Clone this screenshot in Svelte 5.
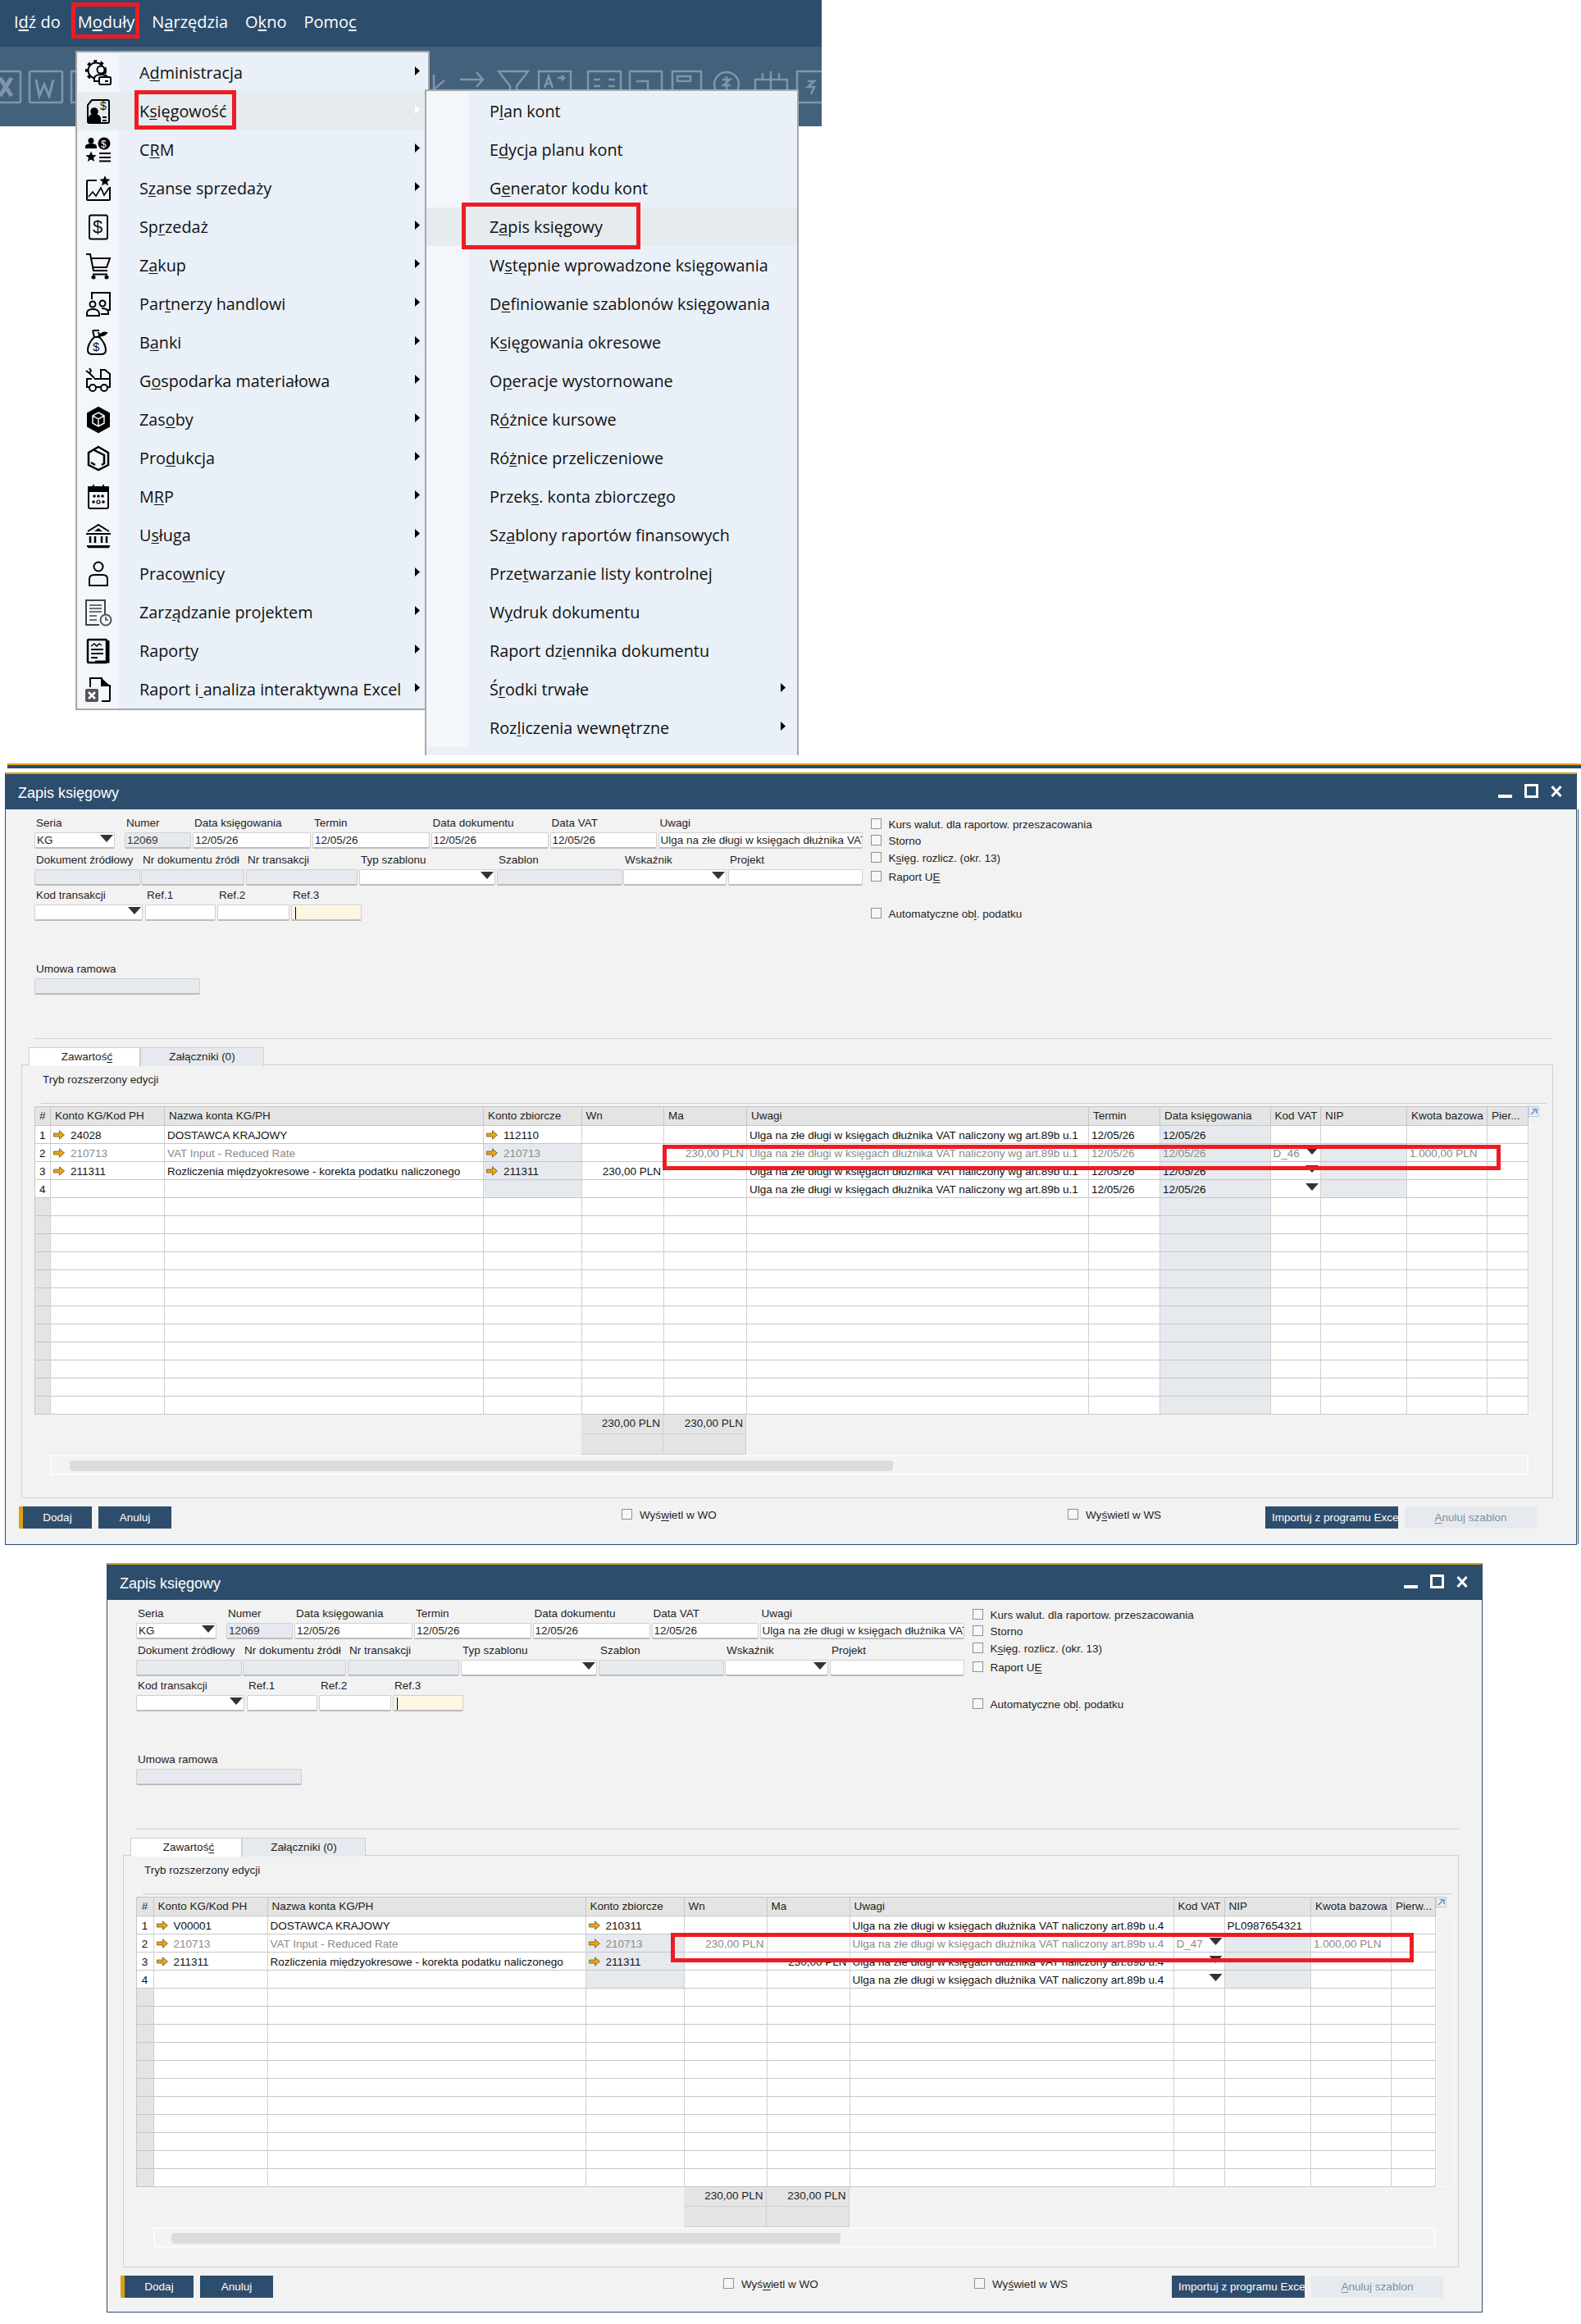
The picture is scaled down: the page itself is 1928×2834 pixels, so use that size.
<script>
	const topMenu = ['I_dź do', 'M_oduły', 'N_arzędzia', 'O_kno', 'Pomo_c'];

	const toolIcons = `
		<rect x="-6" y="30" width="31" height="38" rx="2"/><path d="M0 38l14 22M14 38L0 60" stroke-width="5"/>
		<rect x="36" y="30" width="40" height="38" rx="2"/><path d="M44 40l4 20 6-14 6 14 5-20" stroke-width="3"/>
		<rect x="87" y="30" width="30" height="38"/>
		<path d="M529 34v18l13-11M561 40h28m-8-9l8 9-8 9M561 52v5"/>
		<path d="M608 30h36l-14 18v10h-8V48z"/>
		<rect x="657" y="30" width="39" height="26"/><path d="M664 50l5-14 5 14m-8-5h6M680 38h8m-3-3l3 3-3 3"/>
		<path d="M717 56V30h40v26M724 40h8m10 0h8M724 48h8m10 0h8"/>
		<path d="M768 56V30h39v26M776 42h14v10"/>
		<rect x="820" y="30" width="35" height="26"/><rect x="826" y="36" width="16" height="6"/>
		<circle cx="886" cy="46" r="15"/><path d="M897 56l8 4M886 36v20M881 40h9l-8 7h9"/>
		<path d="M921 56V40h39v16M940 30v26M930 40v-8m20 8v-8"/>
		<rect x="972" y="30" width="40" height="38"/><path d="M985 42h8l-8 7h8l-4 9"/>`;

	const icons = [
		`<circle cx="13" cy="13" r="9.5"/><circle cx="13" cy="13" r="11.5" stroke-width="3" stroke-dasharray="4 4.5"/><g fill="#f3f7fb"><circle cx="19" cy="12" r="4.5"/><path d="M11 26v-3q0-5 8-5t8 4v4z"/><rect x="17" y="21" width="14" height="9" rx="1.5"/></g><path d="M24 26h4"/>`,
		`<path d="M8 2h19a2 2 0 0 1 2 2v24a2 2 0 0 1-2 2H5a2 2 0 0 1-2-2V8z"/><circle cx="11" cy="16" r="3.8" fill="#000"/><path d="M5 28v-4q0-4 6-4t7 4v4z" fill="#000"/><text x="18" y="14" class="glyph" font-size="14">$</text><path d="M21 23h5M21 27h5"/>`,
		`<circle cx="7" cy="4.5" r="3.5" fill="#000" stroke="none"/><path d="M0 14v-2q0-4 7-4t7 4v2z" fill="#000" stroke="none"/><circle cx="23" cy="8" r="7.5" fill="#000" stroke="none"/><text x="19" y="12.500" class="glyph" font-size="12" fill="#fff">$</text><polygon points="7,17.500 8.900,21.900 13.500,22.300 10,25.400 11.200,30 7,27.500 2.800,30 4,25.400 0.500,22.300 5.100,21.900" fill="#000" stroke="none"/><path d="M17 20h14M17 25h14M17 29.500h14"/>`,
		`<path d="M14 6H3a1 1 0 0 0-1 1v22a1 1 0 0 0 1 1h26a1 1 0 0 0 1-1V14"/><path d="M4 26l5-6 4 5 6-10 4 9 6-9" stroke-width="1.600"/><polygon points="24,0 25.800,4.300 30.500,4.700 27,7.800 28,12.500 24,10 20,12.500 21,7.800 17.500,4.700 22.200,4.300" fill="#000" stroke="none"/>`,
		`<rect x="5" y="1.500" width="22" height="29" rx="2"/><text x="9" y="23" class="glyph" font-size="22">$</text>`,
		`<path d="M1 2h5l4 20h17M7 7h23l-4 11H9M9 26.500h18" fill="none"/><circle cx="10" cy="30" r="1.500" fill="#000"/><circle cx="26" cy="30" r="1.500" fill="#000"/>`,
		`<path d="M8 10V2h22v21h-3"/><circle cx="9" cy="16" r="3.500"/><path d="M2 30v-3q0-5 7-5t8 5v3z"/><circle cx="21" cy="15" r="3.500"/><path d="M20 21q8 0 8 5v2h-9"/>`,
		`<path d="M11 9C5 15 3 21 3 25q0 5 6 5h10q6 0 6-5c0-4-2-10-8-16zM11 9h6M9 1l2 8M17 1l-8 0M18 9L16 3"/><path d="M17 7q5-5 9-3-3 4-9 3z" fill="#000"/><text x="9" y="26" class="glyph" font-size="15">$</text>`,
		`<path d="M1 3l4 3 2-3-2-3M5 6l6 6M2 17V13h6M11 13h19v-6l-6-5h-5v11M2 17v6h3M13 23h6M27 23h3v-10"/><circle cx="9" cy="24" r="4"/><circle cx="23" cy="24" r="4"/>`,
		`<polygon points="16,1 29,8 29,24 16,31 3,24 3,8" fill="#000"/><path d="M16 7l7 4v9l-7 4-7-4v-9zM9 11l7 4 7-4M16 15v9" stroke="#f3f7fb" stroke-width="1.500"/>`,
		`<polygon points="16,2 28,9 28,24 16,30 4,24 4,9" stroke-width="2.500"/><path d="M11 6l12 6v10l-3 2M7 21l5 3" stroke-width="2.500"/>`,
		`<rect x="4" y="4" width="24" height="26" rx="2"/><rect x="4" y="4" width="24" height="5" fill="#000"/><path d="M10 1v5M22 1v5"/><g fill="#000" stroke="none"><circle cx="11" cy="15" r="1.800"/><circle cx="16" cy="15" r="1.800"/><circle cx="21" cy="15" r="1.800"/><circle cx="10" cy="22" r="1.800"/><circle cx="22" cy="22" r="1.800"/></g><circle cx="16" cy="22" r="2" stroke-width="1.200"/>`,
		`<path d="M3 11L16 3l13 8M1 14h30M2 29h28" stroke-width="2"/><polygon points="16,7 21,11 11,11" fill="#000" stroke="none"/><path d="M6 17v8M12 17v8M20 17v8M26 17v8" stroke-width="2.500"/><path d="M3 30.500h26" stroke-width="1.500"/>`,
		`<circle cx="16" cy="7" r="5.500"/><path d="M5 30v-8q0-5 6-5h10q6 0 6 5v8z"/>`,
		`<path d="M17 31H1V1h23v17" stroke="#444"/><path d="M5 7h15M5 11h15M5 15h15M5 20h9M5 25h9" stroke="#444" stroke-width="1.500"/><circle cx="25" cy="25" r="6.500" stroke="#555"/><path d="M25 21v4h3" stroke="#444" stroke-width="1.500"/>`,
		`<rect x="3" y="2" width="23" height="28" rx="1" stroke-width="2.500"/><path d="M28 3v26H12" stroke-width="3"/><path d="M7 10l4-3 3 3 3-3 3 2" stroke-width="1.500"/><path d="M7 14h15M7 19h15M7 24h8" stroke-width="2"/>`,
		`<path d="M6 13V2h14v9h10v18a1 1 0 0 1-1 1H20" fill="none"/><polygon points="20,2 30,11 20,11" fill="#000" stroke="none"/><rect x="0" y="15" width="16" height="16" rx="2" fill="#555" stroke="none"/><path d="M4 19l8 8M12 19l-8 8" stroke="#fff" stroke-width="2.500"/>`
	];

	const modules = [
		'A_dministracja', 'K_sięgowość', 'C_RM', 'S_zanse sprzedaży', 'Sp_rzedaż', 'Z_akup', 'Par_tnerzy handlowi',
		'B_anki', 'G_ospodarka materiałowa', 'Zas_oby', 'Pro_dukcja', 'M_RP', 'U_sługa', 'Praco_wnicy',
		'Zarz_ądzanie projektem', 'Rapor_ty', 'Raport i_ analiza interaktywna Excel'
	];

	const accounting = [
		'P_lan kont', 'E_dycja planu kont', 'G_enerator kodu kont', 'Z_apis księgowy', 'W_stępnie wprowadzone księgowania',
		'D_efiniowanie szablonów księgowania', 'K_sięgowania okresowe', 'O_peracje wystornowane', 'R_óżnice kursowe',
		'Ró_żnice przeliczeniowe', 'Przek_s. konta zbiorczego', 'Sz_ablony raportów finansowych', 'Prze_twarzanie listy kontrolnej',
		'W_ydruk dokumentu', 'Raport dz_iennika dokumentu', 'Ś_rodki trwałe', 'Roz_liczenia wewnętrzne'
	];

	const formRows = [
		[
			{ label: 'Seria', w: 98, gap: 12, value: 'KG', dd: true },
			{ label: 'Numer', w: 81, gap: 2, value: '12069', off: true },
			{ label: 'Data księgowania', w: 144, gap: 2, value: '12/05/26' },
			{ label: 'Termin', w: 143, gap: 1.5, value: '12/05/26' },
			{ label: 'Data dokumentu', w: 143, gap: 2, value: '12/05/26' },
			{ label: 'Data VAT', w: 130, gap: 2, value: '12/05/26' },
			{ label: 'Uwagi', w: 249.5, gap: 0, value: 'Ulga na złe długi w księgach dłużnika VAT naliczony' }
		],
		[
			{ label: 'Dokument źródłowy', w: 129, gap: 1, off: true },
			{ label: 'Nr dokumentu źródł', w: 126, gap: 2, off: true },
			{ label: 'Nr transakcji', w: 136, gap: 2, off: true },
			{ label: 'Typ szablonu', w: 166, gap: 2, dd: true },
			{ label: 'Szablon', w: 153, gap: 1, off: true },
			{ label: 'Wskaźnik', w: 126, gap: 2, dd: true },
			{ label: 'Projekt', w: 163.5, gap: 0 }
		],
		[
			{ label: 'Kod transakcji', w: 132, gap: 3, dd: true },
			{ label: 'Ref.1', w: 86, gap: 2 },
			{ label: 'Ref.2', w: 88, gap: 2 },
			{ label: 'Ref.3', w: 86, gap: 0, focus: true }
		]
	];

	const checks = [
		{ text: 'Kurs walut. dla raportow. przeszacowania', top: 5 },
		{ text: 'Storno', top: 7 },
		{ text: 'K_sięg. rozlicz. (okr. 13)', top: 8 },
		{ text: 'Raport U_E', top: 10 },
		{ text: 'Automatyczne ob_l. podatku', top: 32 }
	];

	const base = [
		{ k: 'n', t: '#' },
		{ k: 'acc', t: 'Konto KG/Kod PH' },
		{ k: 'name', t: 'Nazwa konta KG/PH' },
		{ k: 'ctrl', t: 'Konto zbiorcze' },
		{ k: 'dr', t: 'Wn' },
		{ k: 'cr', t: 'Ma' },
		{ k: 'note', t: 'Uwagi' }
	];

	const note1 = 'Ulga na złe długi w księgach dłużnika VAT naliczony wg art.89b u.1';
	const note2 = 'Ulga na złe długi w księgach dłużnika VAT naliczony art.89b u.4';
	const d = '12/05/26';

	const windows = [
		{
			id: 'first',
			left: 6,
			width: 1917,
			padRight: 28,
			cols: [
				...base,
				{ k: 'due', t: 'Termin' },
				{ k: 'post', t: 'Data księgowania' },
				{ k: 'vat', t: 'Kod VAT' },
				{ k: 'nip', t: 'NIP' },
				{ k: 'basis', t: 'Kwota bazowa' },
				{ k: 'first', t: 'Pier...' }
			],
			widths: [19.5, 139, 389, 119.5, 100.5, 101, 417, 87, 134.5, 61.5, 105, 98, 50],
			count: 16,
			rows: [
				{ n: 1, acc: '24028', name: 'DOSTAWCA KRAJOWY', ctrl: '112110', note: note1, due: d, post: d },
				{ n: 2, acc: '210713', name: 'VAT Input - Reduced Rate', ctrl: '210713', cr: '230,00 PLN', note: note1, due: d, post: d, vat: 'D_46', dd: true, basis: '1.000,00 PLN', muted: true },
				{ n: 3, acc: '211311', name: 'Rozliczenia międzyokresowe - korekta podatku naliczonego', ctrl: '211311', dr: '230,00 PLN', note: note1, due: d, post: d, dd: true },
				{ n: 4, note: note1, due: d, post: d, dd: true }
			],
			thumb: [22, 1004],
			panelPad: 27,
			actionsPad: 19,
			bar: { wo: 549, ws: 544, imp: 241 },
			mark: { left: 801, top: 452, width: 1022, height: 31 }
		},
		{
			id: 'second',
			left: 130,
			width: 1678,
			padRight: 28,
			cols: [
				...base,
				{ k: 'vat', t: 'Kod VAT' },
				{ k: 'nip', t: 'NIP' },
				{ k: 'basis', t: 'Kwota bazowa' },
				{ k: 'first', t: 'Pierw...' }
			],
			widths: [21, 139, 388, 120, 101, 101, 395, 62, 105.5, 98, 54],
			count: 15,
			rows: [
				{ n: 1, acc: 'V00001', name: 'DOSTAWCA KRAJOWY', ctrl: '210311', note: note2, nip: 'PL0987654321' },
				{ n: 2, acc: '210713', name: 'VAT Input - Reduced Rate', ctrl: '210713', dr: '230,00 PLN', note: note2, vat: 'D_47', dd: true, basis: '1.000,00 PLN', muted: true },
				{ n: 3, acc: '211311', name: 'Rozliczenia międzyokresowe - korekta podatku naliczonego', ctrl: '211311', cr: '230,00 PLN', note: note2, dd: true },
				{ n: 4, note: note2, dd: true }
			],
			thumb: [20, 816],
			panelPad: 23,
			actionsPad: 17,
			bar: { wo: 549, ws: 306, imp: 241 },
			mark: { left: 687, top: 449, width: 906, height: 36 }
		}
	];

	// which cells get the read-only tint
	function shaded(k, i) {
		if (k === 'n') return i >= 4;
		if (k === 'post') return true;
		if (k === 'ctrl' || k === 'nip') return i >= 1 && i < 4;
		return false;
	}

	const range = (n) => Array.from({ length: n }, (_, i) => i);
	const template = (win) => win.widths.map((w) => `${w}px`).join(' ');
</script>

{#snippet mn(text)}
	{@const parts = text.split('_')}
	{#if parts.length > 1}
		{parts[0]}<u>{parts[1][0]}</u>{parts[1].slice(1)}
	{:else}
		{text}
	{/if}
{/snippet}

{#snippet linkArrow()}
	<svg class="link" viewBox="0 0 14 12" aria-hidden="true">
		<path d="M0.500 4h7V0.800L13.500 6l-6 5.200V8h-7z" fill="#e8a514" stroke="#5a4a20" stroke-width="0.700" />
	</svg>
{/snippet}

{#snippet check(text)}
	<span class="box"></span><span class="chk-text">{@render mn(text)}</span>
{/snippet}

{#snippet field(f)}
	<div class="field" style="width:{f.w}px;margin-right:{f.gap}px">
		<span class="lbl">{f.label}</span>
		<div class="input" class:off={f.off} class:focus={f.focus}>
			{#if f.value}<span class="val">{f.value}</span>{/if}
			{#if f.focus}<span class="caret"></span>{/if}
			{#if f.dd}<span class="dd"></span>{/if}
		</div>
	</div>
{/snippet}

{#snippet docWindow(win)}
	<section class="window {win.id}" style="margin-left:{win.left}px;width:{win.width}px">
		<header class="title">
			<span class="title-text">Zapis księgowy</span>
			<div class="controls">
				<span class="min"></span>
				<span class="max"></span>
				<svg class="close" viewBox="0 0 14 14" aria-hidden="true"><path d="M1.500 1l11 12M12.500 1l-11 12" stroke="#fff" stroke-width="3" /></svg>
			</div>
		</header>

		<div class="form-top">
			<div class="form-left">
				{#each formRows as row, r}
					<div class="form-row r{r}">
						{#each row as f}{@render field(f)}{/each}
					</div>
				{/each}
				<div class="form-row r3">
					<div class="field" style="width:202px">
						<span class="lbl">Umowa ramowa</span>
						<div class="input off"></div>
					</div>
				</div>
			</div>
			<div class="form-right">
				{#each checks as c}
					<div class="chk" style="margin-top:{c.top}px">{@render check(c.text)}</div>
				{/each}
			</div>
		</div>

		<div class="body" style="padding-right:{win.padRight}px">
			<div class="sep"></div>
			<div class="tabs">
				<span class="tab active">Zawartoś<u>ć</u></span>
				<span class="tab">Załączniki (0)</span>
			</div>
			<div class="panel" style="padding-bottom:{win.panelPad}px">
				<p class="mode">Tryb rozszerzony edycji</p>
				<div class="panel-line"></div>
				<div class="table-wrap">
					<div class="grid">
						<div class="tr head" style="grid-template-columns:{template(win)}">
							{#each win.cols as c}<div class="th" class:hash={c.k === 'n'}>{c.t}</div>{/each}
						</div>
						{#each range(win.count) as i}
							{@const row = win.rows[i] ?? {}}
							<div class="tr" class:muted={row.muted} style="grid-template-columns:{template(win)}">
								{#each win.cols as c}
									<div
										class="td {c.k}"
										class:tint={shaded(c.k, i) && c.k !== 'n'}
										class:idx-tint={shaded(c.k, i) && c.k === 'n'}
									>
										{#if (c.k === 'acc' || c.k === 'ctrl') && row[c.k]}{@render linkArrow()}{/if}
										{#if row[c.k] !== undefined}<span class="cell-text">{row[c.k]}</span>{/if}
										{#if c.k === 'vat' && row.dd}<span class="dd cell"></span>{/if}
									</div>
								{/each}
							</div>
						{/each}
						<div class="sums" style="grid-template-columns:{template(win)}">
							<div class="sum a">230,00 PLN</div>
							<div class="sum b">230,00 PLN</div>
							<div class="sum a blank"></div>
							<div class="sum b blank"></div>
						</div>
						<div class="track" style="margin-left:{win.widths[0]}px">
							<div class="thumb" style="margin-left:{win.thumb[0]}px;width:{win.thumb[1]}px"></div>
						</div>
					</div>
					<div class="side">
						<svg class="expand" viewBox="0 0 13 13" aria-hidden="true">
							<rect x="0.500" y="0.500" width="12" height="12" fill="#e9f0f7" stroke="#b9cbe0" />
							<path d="M3 10l6-6M4.500 3.500H10V9" stroke="#6f94c2" stroke-width="1.600" fill="none" />
						</svg>
						<div class="side-box" style="height:{win.count * 22}px"></div>
					</div>
				</div>
			</div>

			<div class="actions" style="padding-bottom:{win.actionsPad}px">
				<button class="btn primary">Dodaj</button>
				<button class="btn second-btn">Anuluj</button>
				<div class="chk act" style="margin-left:{win.bar.wo}px;width:{win.bar.ws}px">{@render check('Wyś_wietl w WO')}</div>
				<div class="chk act" style="width:{win.bar.imp}px">{@render check('Wy_świetl w WS')}</div>
				<button class="btn import"><span>Importuj z programu Excel</span></button>
				<button class="btn disabled"><u>A</u>nuluj szablon</button>
			</div>
		</div>

		<div class="mark" style="left:{win.mark.left}px;top:{win.mark.top}px;width:{win.mark.width}px;height:{win.mark.height}px"></div>
	</section>
{/snippet}

<div class="page">
	<div class="app-top">
		<nav class="menubar">
			{#each topMenu as m}<span class="top-item">{@render mn(m)}</span>{/each}
		</nav>
		<div class="toolbar">
			<svg width="1002" height="97" viewBox="0 0 1002 97" aria-hidden="true">{@html toolIcons}</svg>
		</div>

		<div class="mark" style="left:87px;top:3px;width:83px;height:44px"></div>

		<div class="menu modules">
			{#each modules as m, i}
				<div class="item" class:hot={i === 1}>
					<span class="ico">
						<svg viewBox="0 0 32 32" aria-hidden="true">{@html icons[i]}</svg>
					</span>
					<span class="text">{@render mn(m)}</span>
					<span class="more"></span>
				</div>
			{/each}
		</div>

		<div class="menu accounting">
			{#each accounting as m, i}
				<div class="item" class:hot={i === 3}>
					<span class="ico"></span>
					<span class="text">{@render mn(m)}</span>
					{#if i > 14}<span class="more"></span>{/if}
				</div>
			{/each}
		</div>

		<div class="mark" style="left:164px;top:110px;width:124px;height:48px"></div>
		<div class="mark" style="left:563px;top:247px;width:218px;height:57px"></div>
	</div>

	<div class="back-strip"></div>
	{@render docWindow(windows[0])}
	<div class="w-gap"></div>
	{@render docWindow(windows[1])}
</div>

<style>
	:global(body) {
		margin: 0;
		background: #fff;
	}

	.page {
		width: 1928px;
		height: 2834px;
		overflow: hidden;
		color: #1e1e1e;
		font-family: 'Liberation Sans', Arial, sans-serif;
		font-size: 13.500px;
	}

	u {
		text-underline-offset: 2px;
	}

	/* application chrome + open menus */
	.app-top {
		position: relative;
		height: 931px;
		font-family: 'Open Sans', 'Noto Sans', sans-serif;
	}

	.menubar {
		display: flex;
		align-items: center;
		gap: 21px;
		box-sizing: border-box;
		width: 1002px;
		height: 57px;
		padding: 0 0 4px 17px;
		background: #2d4d6d;
		color: #fff;
		font-size: 20px;
	}

	.toolbar {
		width: 1002px;
		height: 97px;
		background: #43617b;
		overflow: hidden;
	}

	.toolbar svg {
		display: block;
		fill: none;
		stroke: #7f96aa;
		stroke-width: 2.500;
	}

	.menu {
		position: absolute;
		box-sizing: border-box;
		background: #e9f0f7;
		border: 2px solid #a8a8a8;
		font-size: 19.800px;
		color: #111;
	}

	.modules {
		left: 92px;
		top: 62px;
		width: 432px;
		height: 804px;
		padding: 1px 0 0 1px;
	}

	.accounting {
		left: 518px;
		top: 109px;
		width: 456px;
		height: 812px;
		padding: 1px 0 0 0;
		border-bottom: 0;
		background: #e9f0f7;
	}

	.item {
		display: flex;
		align-items: center;
		height: 47px;
		position: relative;
	}

	.item.hot {
		background: #e6ebef;
	}

	.ico {
		flex: 0 0 50px;
		align-self: stretch;
		display: flex;
		align-items: center;
		justify-content: center;
		background: #f3f7fb;
	}

	.hot .ico {
		background: transparent;
	}

	.accounting .ico {
		flex-basis: 52px;
	}

	.ico svg {
		width: 32px;
		height: 32px;
		fill: none;
		stroke: #000;
		stroke-width: 2;
		overflow: visible;
	}

	.ico svg :global(.glyph) {
		font-family: 'Liberation Sans', sans-serif;
		stroke: none;
		fill: currentColor;
	}

	.ico svg :global(text[fill]) {
		fill: #fff;
	}

	.text {
		margin-left: 25px;
		white-space: nowrap;
	}

	.more {
		position: absolute;
		top: 16px;
		right: 10px;
		width: 6px;
		height: 11px;
		background: #000;
		clip-path: polygon(0 0, 100% 50%, 0 100%);
	}

	.accounting .more {
		right: 14px;
	}

	.hot .more {
		background: #fff;
	}

	.mark {
		position: absolute;
		box-sizing: border-box;
		border: 5px solid #ed1c24;
		z-index: 5;
	}

	/* stacked windows */
	.back-strip {
		height: 4px;
		margin-left: 9px;
		border-top: 2px solid #dfa00f;
		background: #2d4d6d;
	}

	.w-gap {
		height: 17px;
	}

	.window {
		position: relative;
		box-sizing: border-box;
		margin-top: 5px;
		background: #f2f2f2;
		border: solid #2d4d6d;
		border-width: 0 1px 1px;
		border-top: 2px solid #dfa00f;
	}

	/* edge of the window stacked behind the first one */
	.window.first::after {
		content: '';
		position: absolute;
		top: 43px;
		right: -3px;
		bottom: 0;
		width: 1px;
		background: #2d4d6d;
	}

	.title {
		display: flex;
		align-items: center;
		justify-content: space-between;
		height: 43px;
		margin: 0 -1px;
		padding: 0 18px 0 16px;
		background: #2d4d6d;
		color: #fff;
		font-size: 18px;
	}

	.title-text {
		padding-top: 3px;
	}

	.controls {
		display: flex;
		align-items: flex-end;
		gap: 15px;
	}

	.min {
		width: 17px;
		height: 4px;
		background: #fff;
		margin-bottom: 2px;
	}

	.max {
		box-sizing: border-box;
		width: 17px;
		height: 17px;
		margin-bottom: 2px;
		border: 3px solid #fff;
	}

	.close {
		width: 14px;
		height: 14px;
		margin-bottom: 3px;
	}

	.form-top {
		display: flex;
		padding: 6px 0 0 35px;
		height: 220px;
		box-sizing: border-box;
	}

	.form-left {
		width: 1009.500px;
		flex: none;
	}

	.form-row {
		display: flex;
	}

	.r1 {
		margin-top: 3px;
	}

	.r2 {
		margin-top: 1px;
	}

	.r3 {
		margin-top: 48px;
	}

	.field {
		display: flex;
		flex-direction: column;
		flex: none;
	}

	.lbl {
		height: 22px;
		line-height: 21px;
		padding-left: 2px;
		white-space: nowrap;
	}

	.input {
		position: relative;
		box-sizing: border-box;
		height: 20px;
		padding-left: 2px;
		background: #fff;
		border: 1px solid #d0d0d0;
		border-bottom: 2px solid #bcbcbc;
		border-radius: 2px;
		line-height: 18px;
		white-space: nowrap;
		overflow: hidden;
	}

	.input.off {
		background: #e6eaee;
		color: #333;
	}

	.input.focus {
		background: #fdf6e3;
	}

	.caret {
		position: absolute;
		left: 4px;
		top: 2px;
		width: 1px;
		height: 15px;
		background: #000;
	}

	.dd {
		position: absolute;
		top: 2px;
		right: 1px;
		width: 16px;
		height: 9px;
		background: #333;
		clip-path: polygon(0 0, 100% 0, 50% 100%);
	}

	.form-right {
		display: flex;
		flex-direction: column;
		margin-left: 10px;
	}

	.chk {
		display: flex;
		align-items: center;
		gap: 9px;
		height: 13px;
		white-space: nowrap;
	}

	.box {
		flex: none;
		box-sizing: border-box;
		width: 13px;
		height: 13px;
		background: #f7f7f7;
		border: 1px solid #8f8f8f;
	}

	.chk-text {
		padding-top: 2px;
	}

	.body {
		padding-left: 19px;
	}

	.sep {
		height: 1px;
		margin: 59px 0 10px 16px;
		background: #cfcfcf;
	}

	.tabs {
		display: flex;
		height: 23px;
		margin-left: 9px;
		position: relative;
		z-index: 1;
	}

	.tab {
		box-sizing: border-box;
		width: 151px;
		text-align: center;
		line-height: 22px;
		background: #e6eaee;
		border: 1px solid #cfcfcf;
		border-bottom: 0;
	}

	.tab.active {
		width: 136px;
		padding-left: 6px;
		background: #fff;
	}

	.panel {
		box-sizing: border-box;
		margin-top: -2px;
		padding: 0 7px 0 14.500px;
		border: 1px solid #cfcfcf;
	}

	.mode {
		height: 46px;
		margin: 0;
		padding-left: 10.500px;
		line-height: 36px;
	}

	.panel-line {
		height: 1px;
		margin: 0 0 3px 8.500px;
		background: #cfcfcf;
	}

	.table-wrap {
		display: flex;
	}

	.grid {
		flex: none;
	}

	.tr {
		display: grid;
		height: 22px;
		background: #fff;
		border-left: 1px solid #c6c6c6;
		box-sizing: border-box;
	}

	.tr.head {
		height: 24px;
		background: #e4e4e4;
		border-top: 1px solid #c6c6c6;
	}

	.th {
		padding-left: 5px;
		line-height: 22px;
		white-space: nowrap;
		overflow: hidden;
		border-right: 1px solid #c6c6c6;
		border-bottom: 1px solid #c6c6c6;
		box-sizing: border-box;
	}

	.th.hash {
		padding-left: 0;
		text-align: center;
	}

	.td {
		position: relative;
		display: flex;
		align-items: center;
		box-sizing: border-box;
		padding-left: 3px;
		border-right: 1px solid #d0d0d0;
		border-bottom: 1px solid #c6c6c6;
		white-space: nowrap;
		overflow: hidden;
		color: #111;
	}

	.cell-text {
		padding-top: 2px;
	}

	.muted .td {
		color: #8a8a8a;
	}

	.muted .td.n {
		color: #111;
	}

	.td.n {
		justify-content: center;
		padding: 0;
	}

	.td.dr,
	.td.cr {
		justify-content: flex-end;
		padding: 0 3px 0 0;
	}

	.td.tint {
		background: #e6eaee;
	}

	.td.idx-tint {
		background: #e4e4e4;
	}

	.link {
		flex: none;
		width: 14px;
		height: 12px;
		margin-right: 7px;
	}

	.dd.cell {
		top: 4px;
		right: 2px;
	}

	.sums {
		display: grid;
		grid-template-rows: 24px 25px;
	}

	.sum {
		box-sizing: border-box;
		padding-right: 3px;
		line-height: 22px;
		text-align: right;
		white-space: nowrap;
		background: #e4e4e4;
		border-right: 1px solid #cfcfcf;
		border-bottom: 1px solid #cfcfcf;
	}

	.sum.a {
		grid-column: 5;
	}

	.sum.b {
		grid-column: 6;
	}

	.track {
		box-sizing: border-box;
		height: 25px;
		padding-top: 5px;
		background: #f3f3f3;
		border: 2px solid #fbfbfb;
	}

	.thumb {
		height: 13px;
		border-radius: 4px;
		background: #dcdcdc;
	}

	.side {
		flex: none;
		width: 23px;
	}

	.expand {
		display: block;
		width: 13px;
		height: 13px;
		margin-bottom: 11px;
	}

	.side-box {
		box-sizing: border-box;
		border: 1px solid #f9f9f9;
	}

	.actions {
		display: flex;
		align-items: flex-start;
		height: 27px;
		margin: 10px 0 0 -3px;
	}

	.btn {
		box-sizing: border-box;
		flex: none;
		width: 89px;
		height: 27px;
		padding: 0;
		margin-right: 8px;
		border: 0;
		background: #2d4d6d;
		color: #fff;
		font: inherit;
		white-space: nowrap;
		overflow: hidden;
	}

	.btn.primary {
		border-left: 5px solid #dfa00f;
	}

	.chk.act {
		flex: none;
		margin-top: 3px;
		margin-right: 0;
	}

	.btn.second-btn {
		margin-right: 0;
	}

	.btn.import {
		width: 162px;
		padding-left: 8px;
		text-align: left;
		margin-right: 8px;
	}

	.btn.import span {
		display: block;
		overflow: hidden;
	}

	.btn.disabled {
		width: 161px;
		margin-right: 0;
		background: #e6eaee;
		color: #7d8fa3;
	}
</style>
